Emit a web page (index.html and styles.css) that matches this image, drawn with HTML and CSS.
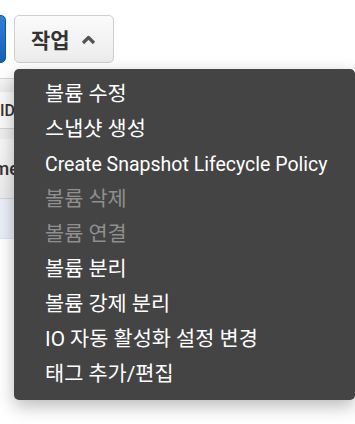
FILE: index.html
```html
<!DOCTYPE html>
<html lang="ko">
<head>
    <meta charset="UTF-8">
    <meta name="viewport" content="width=device-width, initial-scale=1">
    <title>볼륨 작업</title>
    <link rel="stylesheet" href="styles.css">
</head>
<body>
    <div class="page">
        <!-- Toolbar -->
        <div class="toolbar">
            <button class="btn-primary">볼륨 생성</button>
            <button class="btn-actions">
                <span>작업</span>
                <svg class="caret" width="17" height="11" viewBox="0 0 17 11">
                    <path d="M3 9 L8.5 3.5 L14 9" fill="none" stroke="#555" stroke-width="3.2" stroke-linejoin="round"/>
                </svg>
            </button>
        </div>

        <!-- Table behind the menu -->
        <div class="table">
            <div class="table-top"></div>
            <div class="table-head">ID</div>
            <div class="table-gap"></div>
            <div class="table-row">Name</div>
            <div class="table-row selected"></div>
        </div>

        <!-- Actions menu -->
        <ul class="menu">
            <li>볼륨 수정</li>
            <li>스냅샷 생성</li>
            <li class="latin">Create Snapshot Lifecycle Policy</li>
            <li class="disabled">볼륨 삭제</li>
            <li class="disabled">볼륨 연결</li>
            <li>볼륨 분리</li>
            <li>볼륨 강제 분리</li>
            <li>IO 자동 활성화 설정 변경</li>
            <li>태그 추가/편집</li>
        </ul>
    </div>
</body>
</html>
```

FILE: styles.css
```css
* {
    margin: 0;
    padding: 0;
    box-sizing: border-box;
}

body {
    font-family: Roboto, "Noto Sans CJK KR", sans-serif;
    background-color: #ffffff;
    overflow: hidden;
}

.page {
    position: relative;
    height: 424px;
}

.toolbar {
    display: flex;
    gap: 8px;
    padding-top: 15px;
    height: 69px;
}

.btn-primary {
    width: 80px;
    height: 48px;
    margin-left: -74px;
    border: 1px solid #0e56a8;
    border-radius: 5px;
    background: linear-gradient(#2f80da, #145fb6);
    color: transparent;
    font-size: 1px;
}

.btn-actions {
    display: flex;
    align-items: center;
    gap: 10px;
    width: 100px;
    height: 48px;
    padding-left: 16px;
    border: 1px solid #cfcfcf;
    border-radius: 5px;
    background: linear-gradient(#fbfbfb, #ececec);
    color: #333;
    font-family: "Noto Sans CJK KR", sans-serif;
    font-size: 21px;
    font-weight: 700;
}

.caret {
    margin-top: 1px;
}

.table {
    margin-top: 9px;
    font-size: 16px;
    font-weight: 500;
    color: #333;
}

.table-top {
    height: 14px;
    border-top: 1px solid #d5d5d5;
    background: linear-gradient(#f6f6f6, #ececec);
}

.table-head {
    height: 37px;
    line-height: 37px;
    background: #fafafa;
    border-bottom: 1px solid #d3d3d3;
}

.table-gap {
    height: 10px;
    background: #eeeeee;
}

.table-row {
    height: 60px;
    line-height: 60px;
    margin-left: -29px;
    background: linear-gradient(#f7f7f7, #ececec);
    border-bottom: 1px solid #d6d6d6;
    font-size: 18px;
}

.table-row.selected {
    height: 40px;
    background: #e9eff8;
    border-bottom: 1px solid #dde5f0;
}

.menu {
    position: absolute;
    top: 69px;
    left: 14px;
    width: 341px;
    padding: 8px 0;
    list-style: none;
    background-color: #444444;
    border-radius: 5px;
    box-shadow: 0 6px 18px rgba(0, 0, 0, 0.28);
}

.menu li {
    height: 35px;
    line-height: 35px;
    padding-left: 31px;
    font-size: 20.8px;
    color: #ffffff;
    white-space: nowrap;
}

.menu li.latin {
    font-size: 19.5px;
}

.menu li.disabled {
    color: #8f8f8f;
}
```
